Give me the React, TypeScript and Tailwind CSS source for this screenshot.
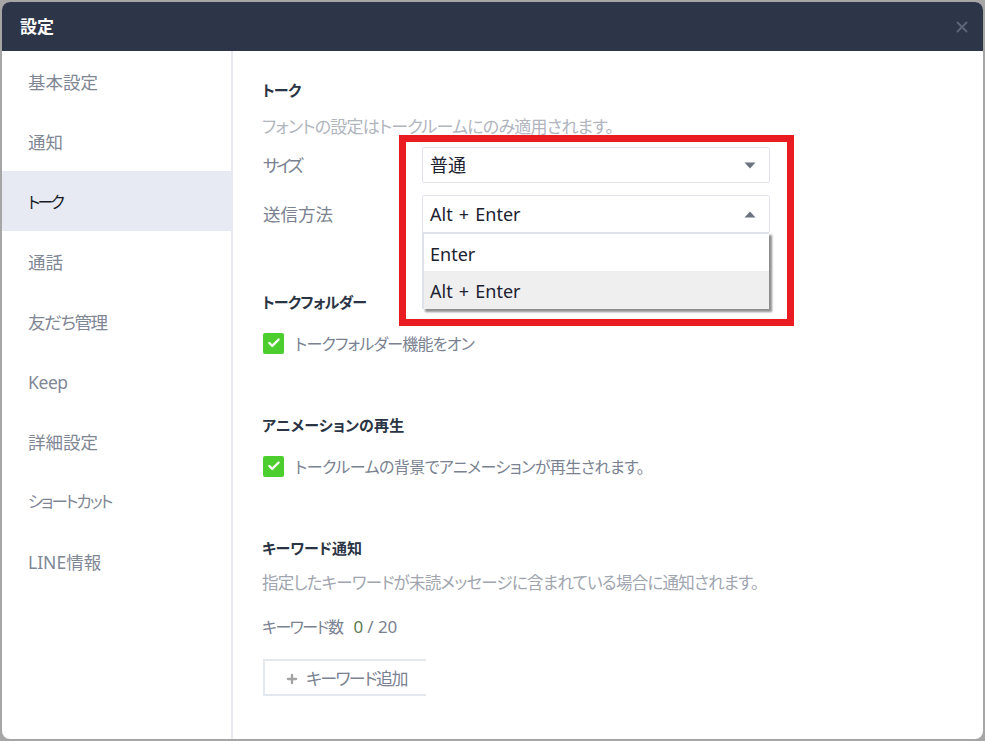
import { Check, Plus, X } from 'lucide-react';

const font = { fontFamily: '"Noto Sans", "Noto Sans CJK JP", sans-serif' };

const menu = [
  { label: '基本設定', cls: 'text-[17.5px]' },
  { label: '通知', cls: 'text-[17.5px]' },
  { label: 'トーク', cls: 'text-[16px] tracking-[-2.8px]' },
  { label: '通話', cls: 'text-[17.5px]' },
  { label: '友だち管理', cls: 'text-[17.5px] tracking-[-1.4px]' },
  { label: 'Keep', cls: 'text-[17.5px] tracking-[-0.4px]' },
  { label: '詳細設定', cls: 'text-[17.5px]' },
  { label: 'ショートカット', cls: 'text-[16.5px] tracking-[-2px]' },
  { label: 'LINE情報', cls: 'text-[17.5px]' },
];

function Caret({ up }: { up?: boolean }) {
  return (
    <svg width="12" height="7" viewBox="0 0 12 7" className="fill-[#6b7280]">
      <path d={up ? 'M6 0.5L11.5 6.5H0.5Z' : 'M0.5 0.5H11.5L6 6.5Z'} />
    </svg>
  );
}

function Select({ value, up, className }: { value: string; up?: boolean; className: string }) {
  return (
    <div className={`flex w-[348px] items-center justify-between rounded-[2px] border border-[#e0e3ea] bg-white pl-[7px] pr-[13px] text-[18px] text-[#1c2230] [word-spacing:1.5px] ${className}`}>
      <span>{value}</span>
      <Caret up={up} />
    </div>
  );
}

function Checkbox({ label, className }: { label: string; className: string }) {
  return (
    <div className="flex h-[24px] items-center gap-[11px]">
      <span className="flex h-[21px] w-[21px] items-center justify-center rounded-[2px] bg-[#4cce2e]">
        <Check className="h-[14px] w-[14px] text-white" strokeWidth={4} />
      </span>
      <span className={`pt-[2px] text-[16px] text-[#7a8291] ${className}`}>{label}</span>
    </div>
  );
}

function Heading({ children, className = '' }: { children: string; className?: string }) {
  return <div className={`-ml-px h-[24px] text-[15px] font-bold leading-[24px] text-[#2b3444] ${className}`}>{children}</div>;
}

export default function App() {
  return (
    <div style={font} className="h-[741px] w-[985px] overflow-hidden bg-[#a6a6a6] p-[2px] [font-feature-settings:'palt']">
      <div className="relative flex h-[737px] w-[981px] flex-col overflow-hidden rounded-[8px] bg-white">
        {/* Title bar */}
        <div className="flex h-[49px] shrink-0 items-center justify-between bg-[#2d3548] pl-[18px] pr-[12px]">
          <span className="text-[17px] font-bold text-white">設定</span>
          <X className="h-[18px] w-[18px] text-[#5d6577]" strokeWidth={2.5} />
        </div>

        <div className="flex min-h-0 flex-1">
          {/* Side menu */}
          <div className="w-[231px] shrink-0 border-r-2 border-[#e6e9f0]">
            {menu.map((item) => (
              <div
                key={item.label}
                className={`flex h-[60px] items-center pl-[26px] pt-[2px] ${item.cls} ${item.label === 'トーク' ? 'w-[229px] bg-[#e7eaf2] text-[#161b26]' : 'text-[#7f8795]'}`}
              >
                {item.label}
              </div>
            ))}
          </div>

          {/* Settings */}
          <div className="relative flex-1 pl-[30px] pt-[27px]">
            <Heading className="tracking-[-0.6px]">トーク</Heading>
            <div className="-ml-px mt-[13px] h-[24px] text-[17px] leading-[24px] tracking-[-0.75px] text-[#b0b5be]">フォントの設定はトークルームにのみ適用されます。</div>
            <div className="mt-[8px] flex items-center">
              <span className="w-[159px] text-[17.5px] tracking-[-3.4px] text-[#7a8291]">サイズ</span>
              <Select value="普通" className="h-[36px] pt-[1px]" />
            </div>
            <div className="mt-[12px] flex items-center">
              <span className="w-[159px] text-[17.5px] text-[#7a8291]">送信方法</span>
              <Select value="Alt + Enter" up className="h-[38px]" />
            </div>

            <div className="mt-[57px]">
              <Heading className="tracking-[-0.7px]">トークフォルダー</Heading>
            </div>
            <div className="mt-[17px]">
              <Checkbox label="トークフォルダー機能をオン" className="tracking-[-0.8px]" />
            </div>

            <div className="mt-[58px]">
              <Heading className="tracking-[0.2px]">アニメーションの再生</Heading>
            </div>
            <div className="mt-[17px]">
              <Checkbox label="トークルームの背景でアニメーションが再生されます。" className="tracking-[-0.55px]" />
            </div>

            <div className="mt-[58px]">
              <Heading>キーワード通知</Heading>
            </div>
            <div className="-ml-px mt-[11px] h-[24px] text-[16.5px] leading-[24px] tracking-[-0.75px] text-[#a0a5af]">指定したキーワードが未読メッセージに含まれている場合に通知されます。</div>
            <div className="-ml-px mt-[20px] flex h-[24px] items-center text-[17px] text-[#7a8291]">
              <span className="text-[16px] tracking-[-1.5px]">キーワード数</span>
              <span className="ml-[11px] text-[#5d7a52]">0</span>
              <span className="ml-[4px]">/ 20</span>
            </div>
            <button className="mt-[20px] flex h-[37px] w-[163px] items-center gap-[7px] border-2 border-r-0 border-[#e3e7ee] pl-[20px] pt-[2px] text-[17px] tracking-[-1.6px] text-[#7a8291]">
              <Plus className="h-[14px] w-[14px] text-[#a3a3a3]" strokeWidth={4} />
              キーワード追加
            </button>
          </div>
        </div>

        {/* Open dropdown list */}
        <div className="absolute left-[420px] top-[230px] w-[347px] border-2 border-b-0 border-r-0 border-[#dfe2e9] bg-white text-[18px] text-[#1c2230] shadow-[3px_3px_2px_#8f8f8f] [word-spacing:1.5px]">
          <div className="flex h-[37px] items-center pl-[6px] pt-[3px]">Enter</div>
          <div className="flex h-[38px] items-center bg-[#efefef] pl-[6px] pt-[3px]">Alt + Enter</div>
        </div>

        {/* Red callout */}
        <div className="pointer-events-none absolute left-[397px] top-[133px] h-[191px] w-[395px] border-[7px] border-[#e81c21]" />
      </div>
    </div>
  );
}
